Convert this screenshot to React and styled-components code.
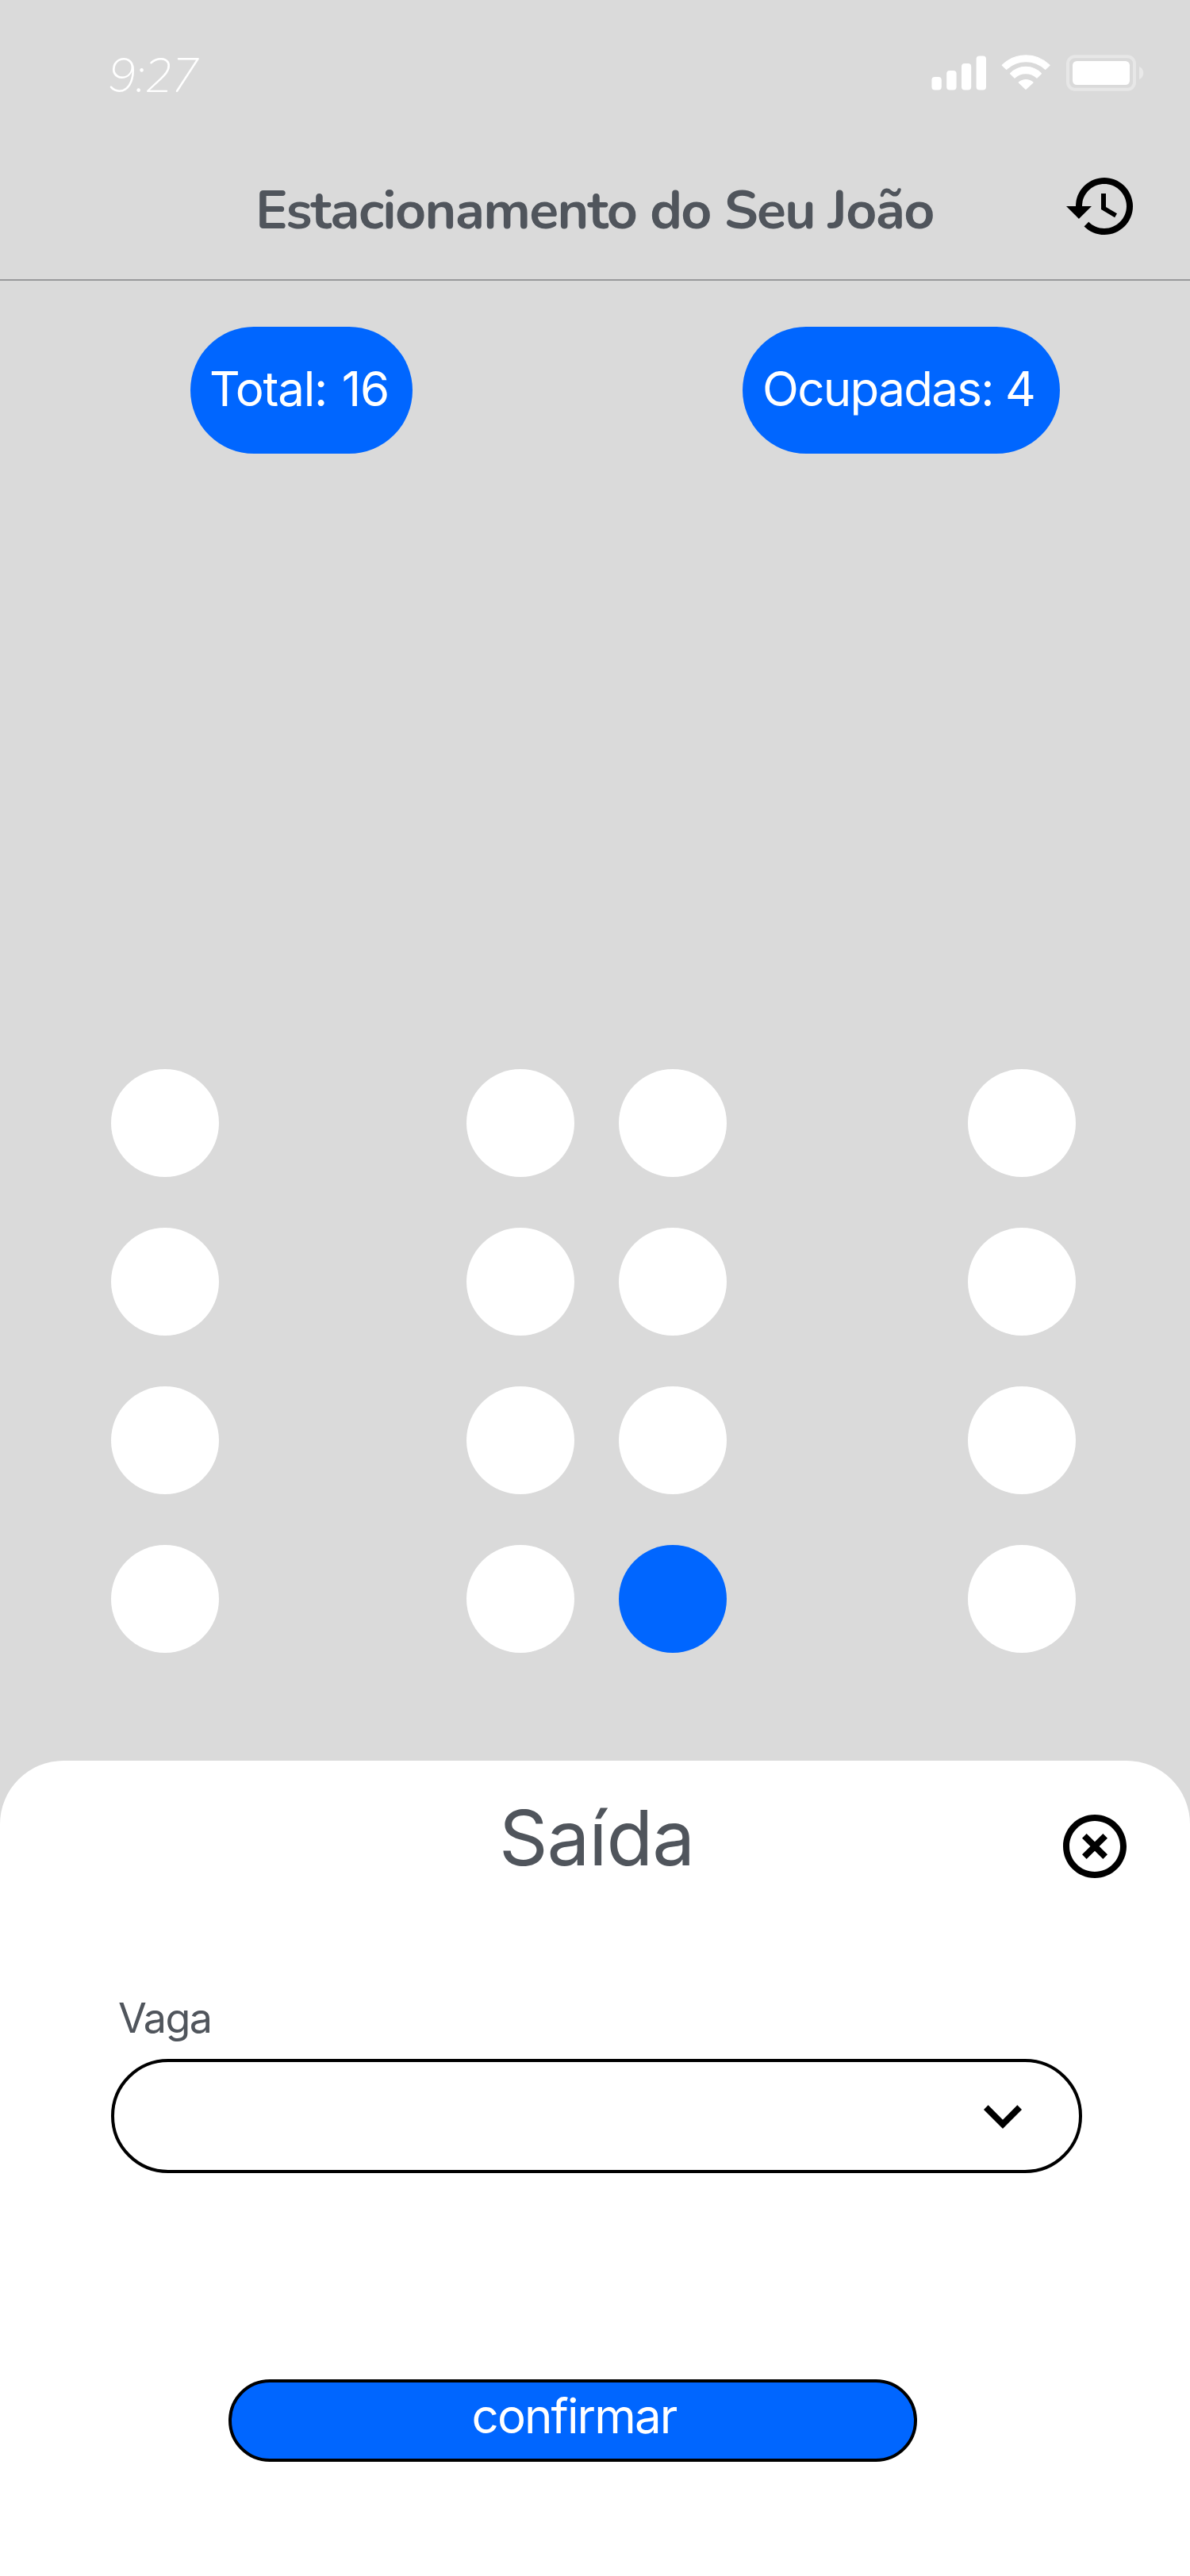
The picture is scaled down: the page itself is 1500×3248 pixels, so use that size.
import React from "react";
import styled, { createGlobalStyle } from "styled-components";

const BLUE = "#0066ff";
const INK = "#50555c";

const GlobalStyle = createGlobalStyle`
  *, *::before, *::after { box-sizing: border-box; }
  body { margin: 0; background: #dadada; }
`;

const Screen = styled.div`
  display: flex;
  flex-direction: column;
  width: 1500px;
  height: 3248px;
  background: #dadada;
  font-family: "Inter", "Liberation Sans", sans-serif;
  font-weight: 400;
  white-space: nowrap;
  overflow: hidden;
`;

const StatusBar = styled.div`
  display: flex;
  justify-content: space-between;
  height: 212px;
  padding: 60px 58px 0 136px;
`;

const Time = styled.time`
  padding-top: 4px;
  color: #fff;
  font-family: "Nunito", "Lato", sans-serif;
  font-size: 60px;
  font-style: italic;
  font-weight: 200;
  line-height: 64px;
  letter-spacing: -1.8px;
`;

const StatusIcons = styled.div`
  display: flex;
  height: 64px;
`;

const Header = styled.header`
  display: flex;
  justify-content: space-between;
  height: 142px;
  padding: 0 64px 0 322px;
  border-bottom: 2px solid #98999b;
`;

const Title = styled.h1`
  margin: 0;
  padding-top: 6px;
  color: ${INK};
  font-family: "Nunito", "Lato", sans-serif;
  font-size: 68px;
  font-weight: 700;
  line-height: 96px;
  letter-spacing: -1.632px;
`;

const IconButton = styled.button`
  display: block;
  width: 96px;
  height: 96px;
  padding: 0;
  border: 0;
  background: none;
  color: #000;
`;

const Counters = styled.section`
  display: flex;
  justify-content: space-between;
  padding: 58px 164px 0 240px;
`;

const Pill = styled.div`
  width: ${(p) => p.$width}px;
  height: 160px;
  padding-left: ${(p) => p.$inset}px;
  border-radius: 80px;
  background: ${BLUE};
  color: #fff;
  font-size: 60px;
  line-height: 156px;
  letter-spacing: ${(p) => p.$tracking}px;
  word-spacing: ${(p) => p.$wordGap || 0}px;
`;

const Lot = styled.section`
  display: flex;
  padding: 776px 0 0 140px;
`;

const Aisle = styled.div`
  display: grid;
  grid-template-columns: repeat(${(p) => p.$columns}, 136px);
  gap: 64px 56px;
  margin-right: ${(p) => p.$lane}px;
`;

const Spot = styled.div`
  width: 136px;
  height: 136px;
  border-radius: 50%;
  background: ${(p) => (p.$selected ? BLUE : "#fff")};
`;

const Sheet = styled.section`
  display: flex;
  flex-direction: column;
  flex: 1;
  margin-top: 136px;
  padding: 60px 72px 0 140px;
  border-radius: 80px 80px 0 0;
  background: #fff;
`;

const SheetHeader = styled.div`
  display: flex;
  justify-content: space-between;
  height: 96px;
  padding-left: 489px;
`;

const SheetTitle = styled.h2`
  margin: 0;
  color: ${INK};
  font-size: 96px;
  font-weight: 400;
  line-height: 74px;
  letter-spacing: -1.1px;
`;

const Label = styled.label`
  margin-top: 137px;
  padding-left: 9px;
  color: ${INK};
  font-size: 52px;
  line-height: 64px;
  letter-spacing: -1.5px;
`;

const Select = styled.div`
  display: flex;
  align-items: center;
  justify-content: flex-end;
  width: 1224px;
  height: 144px;
  margin-top: 19px;
  padding-right: 48px;
  border: 4px solid #000;
  border-radius: 72px;
`;

const Confirm = styled.button`
  width: 868px;
  height: 104px;
  margin: 260px 0 0 148px;
  padding: 0 0 12px 3px;
  border: 4px solid #000;
  border-radius: 52px;
  background: ${BLUE};
  color: #fff;
  font-family: inherit;
  font-size: 60px;
  font-weight: 400;
  line-height: 84px;
  letter-spacing: -1.87px;
`;

const WifiMark = styled.svg`
  margin-left: 18px;
`;

const BatteryMark = styled.svg`
  margin-left: 20px;
`;

const Glyph = ({ d }) => (
  <svg width="96" height="96" viewBox="0 0 24 24" fill="#000" display="block">
    <path d={d} />
  </svg>
);

const HISTORY =
  "M13 3c-4.97 0-9 4.03-9 9H1l3.89 3.89.07.14L9 12H6c0-3.87 3.13-7 7-7s7 3.13 7 7-3.13 7-7 7c-1.93 0-3.68-.79-4.94-2.06l-1.42 1.42C8.27 19.99 10.51 21 13 21c4.97 0 9-4.03 9-9s-4.03-9-9-9zm-1 5v5l4.28 2.54.72-1.21-3.5-2.08V8H12z";
const CLOSE =
  "M14.59 8L12 10.59 9.41 8 8 9.41 10.59 12 8 14.59 9.41 16 12 13.41 14.59 16 16 14.59 13.41 12 16 9.41 14.59 8zM12 2C6.47 2 2 6.47 2 12s4.47 10 10 10 10-4.47 10-10S17.53 2 12 2zm0 18c-4.41 0-8-3.59-8-8s3.59-8 8-8 8 3.59 8 8-3.59 8-8 8z";
const CHEVRON = "M16.59 8.59L12 13.17 7.41 8.59 6 10l6 6 6-6z";

const Signal = () => (
  <svg width="72" height="64" viewBox="0 0 72 64" fill="#fff">
    <rect x="2.4" y="37" width="12.4" height="16.400" rx="4" />
    <rect x="21.200" y="29" width="12.400" height="24.400" rx="4" />
    <rect x="40" y="20" width="12.200" height="33.400" rx="4" />
    <rect x="58.600" y="10.400" width="12.400" height="43" rx="4" />
  </svg>
);

const Wifi = () => (
  <WifiMark
    width="62"
    height="64"
    viewBox="337 30 186 192"
    fill="#fff"
    stroke="#fff"
    strokeWidth="4"
    strokeLinejoin="round"
  >
    <path d="M341 97A126 126 0 0 1 520 97L504 112A107 107 0 0 0 357 112Z" />
    <path d="M372 128A80 80 0 0 1 488 128L472 144A62 62 0 0 0 388 144Z" />
    <path d="M404 162A40 40 0 0 1 457 162L430 187Z" />
  </WifiMark>
);

const Battery = () => (
  <BatteryMark width="98" height="64" viewBox="0 0 98 64">
    <rect x="2" y="11.300" width="84" height="41.400" rx="9" fill="none" stroke="#fff" strokeOpacity=".35" strokeWidth="4" />
    <path d="M92 24c3 1.200 5.300 4.400 5.300 8s-2.300 6.800-5.300 8z" fill="#fff" fillOpacity=".4" />
    <rect x="8" y="17" width="72" height="30" rx="5.300" fill="#fff" />
  </BatteryMark>
);

const AISLES = [
  { columns: 1, lane: 312, spots: ["A1", "A2", "A3", "A4"] },
  { columns: 2, lane: 304, spots: ["B1", "C1", "B2", "C2", "B3", "C3", "B4", "C4"] },
  { columns: 1, lane: 0, spots: ["D1", "D2", "D3", "D4"] },
];

export default function App() {
  return (
    <Screen>
      <GlobalStyle />
      <StatusBar>
        <Time>9:27</Time>
        <StatusIcons>
          <Signal />
          <Wifi />
          <Battery />
        </StatusIcons>
      </StatusBar>
      <Header>
        <Title>Estacionamento do Seu João</Title>
        <IconButton>
          <Glyph d={HISTORY} />
        </IconButton>
      </Header>
      <Counters>
        <Pill $width={280} $inset={24} $tracking={-1.24} $wordGap={3.2}>Total: 16</Pill>
        <Pill $width={400} $inset={25} $tracking={-1.68}>Ocupadas: 4</Pill>
      </Counters>
      <Lot>
        {AISLES.map((aisle) => (
          <Aisle key={aisle.spots[0]} $columns={aisle.columns} $lane={aisle.lane}>
            {aisle.spots.map((id) => (
              <Spot key={id} $selected={id === "C4"} />
            ))}
          </Aisle>
        ))}
      </Lot>
      <Sheet>
        <SheetHeader>
          <SheetTitle>Saída</SheetTitle>
          <IconButton>
            <Glyph d={CLOSE} />
          </IconButton>
        </SheetHeader>
        <Label>Vaga</Label>
        <Select>
          <Glyph d={CHEVRON} />
        </Select>
        <Confirm>confirmar</Confirm>
      </Sheet>
    </Screen>
  );
}
